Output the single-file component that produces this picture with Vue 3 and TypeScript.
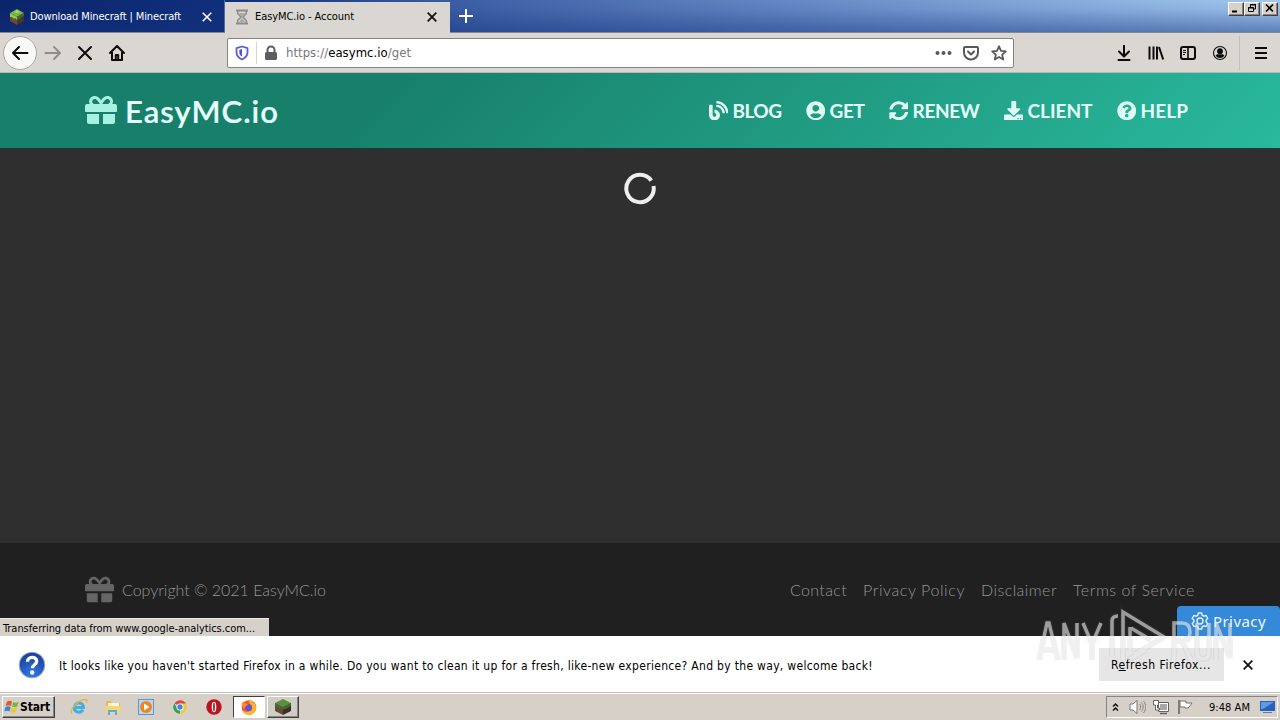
<script setup lang="ts">
interface NavItem { label: string; width: number; box: string; icon: string }

const gift = 'M32 448c0 17.7 14.3 32 32 32h160V320H32v128zm256 32h160c17.7 0 32-14.3 32-32V320H288v160zm192-320h-42.1c6.2-12.1 10.1-25.5 10.1-40 0-48.5-39.5-88-88-88-41.6 0-68.5 21.3-103 68.3-34.5-47-61.4-68.3-103-68.3-48.5 0-88 39.5-88 88 0 14.5 3.8 27.9 10.1 40H32c-17.7 0-32 14.3-32 32v80c0 8.8 7.2 16 16 16h480c8.8 0 16-7.2 16-16v-80c0-17.7-14.3-32-32-32zm-326.1 0c-22.1 0-40-17.9-40-40s17.9-40 40-40c19.9 0 34.6 3.3 86.1 80h-86.1zm206.1 0h-86.1c51.4-76.5 65.7-80 86.1-80 22.1 0 40 17.9 40 40s-17.9 40-40 40z'

const nav: NavItem[] = [
  { label: 'BLOG', width: 49, box: '0 0 512 512', icon: 'M172.2 226.8c-14.6-2.9-28.2 8.9-28.2 23.8V301c0 10.2 7.1 18.4 16.7 22 18.2 6.8 31.3 24.4 31.3 45 0 26.5-21.5 48-48 48s-48-21.5-48-48V120c0-13.3-10.7-24-24-24H24c-13.3 0-24 10.7-24 24v248c0 89.5 82.1 160.2 175 140.7 54.4-11.4 98.3-55.4 109.7-109.7 17.4-82.9-37-157.2-112.5-172.2zM209 0c-9.2-.5-17 6.8-17 16v31.6c0 8.5 6.6 15.5 15 15.9 129.4 7 233.4 112 240.9 241.5.5 8.4 7.5 15 15.9 15h32.1c9.2 0 16.5-7.8 16-17C503.4 139.8 372.2 8.6 209 0zm.3 96c-9.3-.7-17.3 6.7-17.3 16.1v32.1c0 8.4 6.5 15.3 14.8 15.9 76.8 6.3 138 68.2 144.9 145.2.8 8.3 7.6 14.7 15.9 14.7h32.2c9.3 0 16.8-8 16.1-17.3-8.4-110.1-96.5-198.2-206.6-206.7z' },
  { label: 'GET', width: 35, box: '0 0 496 512', icon: 'M248 8C111 8 0 119 0 256s111 248 248 248 248-111 248-248S385 8 248 8zm0 96c48.6 0 88 39.4 88 88s-39.4 88-88 88-88-39.4-88-88 39.4-88 88-88zm0 344c-58.7 0-111.3-26.6-146.5-68.2 18.8-35.4 55.6-59.8 98.5-59.8 2.4 0 4.8.4 7.1 1.1 13 4.2 26.6 6.9 40.9 6.9 14.3 0 28-2.7 40.9-6.9 2.3-.7 4.7-1.1 7.1-1.1 42.9 0 79.7 24.4 98.5 59.8C359.3 421.4 306.7 448 248 448z' },
  { label: 'RENEW', width: 67, box: '0 0 512 512', icon: 'M370.72 133.28C339.458 104.008 298.888 87.962 255.848 88c-77.458.068-144.328 53.178-162.791 126.85-1.344 5.363-6.122 9.15-11.651 9.15H24.103c-7.498 0-13.194-6.807-11.807-14.176C33.933 94.924 134.813 8 256 8c66.448 0 126.791 26.136 171.315 68.685L463.03 40.97C478.149 25.851 504 36.559 504 57.941V192c0 13.255-10.745 24-24 24H345.941c-21.382 0-32.09-25.851-16.971-40.971l41.75-41.749zM32 296h134.059c21.382 0 32.09 25.851 16.971 40.971l-41.75 41.75c31.262 29.273 71.835 45.319 114.876 45.28 77.418-.07 144.315-53.144 162.787-126.849 1.344-5.363 6.122-9.15 11.651-9.15h57.304c7.498 0 13.194 6.807 11.807 14.176C478.067 417.076 377.187 504 256 504c-66.448 0-126.791-26.136-171.315-68.685L48.97 471.03C33.851 486.149 8 475.441 8 454.059V320c0-13.255 10.745-24 24-24z' },
  { label: 'CLIENT', width: 65, box: '0 0 512 512', icon: 'M216 0h80c13.3 0 24 10.7 24 24v168h87.7c17.8 0 26.7 21.5 14.1 34.1L269.7 378.3c-7.5 7.5-19.8 7.5-27.3 0L90.1 226.1c-12.6-12.6-3.7-34.1 14.1-34.1H192V24c0-13.3 10.7-24 24-24zm296 376v112c0 13.3-10.7 24-24 24H24c-13.3 0-24-10.7-24-24V376c0-13.3 10.7-24 24-24h146.7l49 49c20.1 20.1 52.5 20.1 72.6 0l49-49H488c13.3 0 24 10.7 24 24zm-124 88c0-11-9-20-20-20s-20 9-20 20 9 20 20 20 20-9 20-20zm64 0c0-11-9-20-20-20s-20 9-20 20 9 20 20 20 20-9 20-20z' },
  { label: 'HELP', width: 47.5, box: '0 0 512 512', icon: 'M504 256c0 136.997-111.043 248-248 248S8 392.997 8 256C8 119.083 119.043 8 256 8s248 111.083 248 248zM262.655 90c-54.497 0-89.255 22.957-116.549 63.758-3.536 5.286-2.353 12.415 2.715 16.258l34.699 26.31c5.205 3.947 12.621 3.008 16.665-2.122 17.864-22.658 30.113-35.797 57.303-35.797 20.429 0 45.698 13.148 45.698 32.958 0 14.976-12.363 22.667-32.534 33.976C247.128 238.528 216 254.941 216 296v4c0 6.627 5.373 12 12 12h56c6.627 0 12-5.373 12-12v-1.333c0-28.462 83.186-29.647 83.186-106.667 0-58.002-60.165-102-116.531-102zM256 338c-25.365 0-46 20.635-46 46 0 25.364 20.635 46 46 46s46-20.636 46-46c0-25.365-20.635-46-46-46z' },
]

const links = [
  { label: 'Contact', width: 57 },
  { label: 'Privacy Policy', width: 102 },
  { label: 'Disclaimer', width: 76 },
  { label: 'Terms of Service', width: 122 },
]

// Spreads a label's letters so that it fills the given width.
const vFit = {
  mounted(el: HTMLElement, binding: { value: number }) {
    const count = (el.textContent ?? '').length
    const natural = el.getBoundingClientRect().width
    el.style.letterSpacing = `${(binding.value - natural) / count}px`
  },
}
</script>

<template>
  <div class="screen">
    <div class="tabs">
      <div class="tab first">
        <svg class="cube" width="16" height="18" viewBox="0 0 16 18">
          <path d="M8 1l7 4-7 4-7-4z" fill="#79b34a" /><path d="M1 5l7 4v8l-7-4z" fill="#6b4a36" /><path d="M15 5L8 9v8l7-4z" fill="#49352b" />
          <path d="M1 5l7 4v3l-2-2-1 1-2-2-2 0z" fill="#8fcb4e" /><path d="M15 5L8 9v3l3-1 1-2 3-1z" fill="#42682a" /><path d="M5 4l3-2 3 2-3 1z" fill="#a2dc62" />
        </svg>
        <span v-fit="151" class="t">Download Minecraft | Minecraft</span>
        <svg class="x" width="10" height="10" viewBox="0 0 10 10"><path d="M.7.7l8.6 8.6M9.3.7L.7 9.3" stroke="#fff" stroke-width="1.6" /></svg>
      </div>
      <div class="tab active">
        <svg width="14" height="16" viewBox="0 0 14 16" fill="none" stroke="#8d8b88">
          <path d="M1 1.500h12M1 14.500h12" stroke-width="2" /><path d="M2.700 2v2.500L6 8l-3.300 3.500V14M11.300 2v2.500L8 8l3.300 3.500V14" stroke-width="1.500" /><path d="M4 4h6L7 7.500zM7 9l3 4H4z" fill="#aaa7a3" stroke="none" />
        </svg>
        <span v-fit="99" class="t">EasyMC.io - Account</span>
        <svg class="x" width="10" height="10" viewBox="0 0 10 10"><path d="M.7.7l8.600 8.600M9.300.7L.7 9.300" stroke="#111" stroke-width="1.800" /></svg>
      </div>
      <svg class="plus" width="14" height="14" viewBox="0 0 14 14"><path d="M7 0v14M0 7h14" stroke="#fff" stroke-width="2" /></svg>
      <div class="winbtns">
        <i><svg width="14" height="12"><path d="M3 8.500h5" stroke="#000" stroke-width="2" /></svg></i>
        <i><svg width="14" height="12" fill="none" stroke="#000"><path d="M5.500 4V1.500h5v4.500H9M5 2h6M3.500 4.500h5v4h-5zM3 5h6" /></svg></i>
        <i class="closebtn"><svg width="14" height="12"><path d="M3 1.500l7 7M10 1.500l-7 7" stroke="#000" stroke-width="1.600" /></svg></i>
      </div>
    </div>

    <div class="toolbar">
      <div class="back"><svg width="18" height="16" viewBox="0 0 18 16" fill="none" stroke="#0c0c0d" stroke-width="2" stroke-linecap="round" stroke-linejoin="round"><path d="M16.500 8H2M8 2L2 8l6 6" /></svg></div>
      <svg class="fwd" width="18" height="16" viewBox="0 0 18 16" fill="none" stroke="#8f8d8a" stroke-width="2" stroke-linecap="round" stroke-linejoin="round"><path d="M1.500 8H16M10 2l6 6-6 6" /></svg>
      <svg class="stop" width="16" height="16" viewBox="0 0 16 16"><path d="M2 2l12 12M14 2L2 14" stroke="#0c0c0d" stroke-width="2" stroke-linecap="round" /></svg>
      <svg class="home" width="16" height="16" viewBox="0 0 16 16" fill="none" stroke="#0c0c0d" stroke-width="2" stroke-linecap="round" stroke-linejoin="round"><path d="M1 8l7-7 7 7M3 7v8h10V7M6.800 14.500V10h2.400v4.500" /></svg>
      <div class="url">
        <svg class="shield" width="14" height="16" viewBox="0 0 14 16"><path d="M7 1.500l5.500 1.700v4C12.500 11 10 13 7 14.500 4 13 1.500 11 1.500 7.200v-4z" fill="none" stroke="#615bdc" stroke-width="1.800" stroke-linejoin="round" /><path d="M7 4v7.500C5 10.500 4.300 9 4.300 7V4.700z" fill="#4e55d8" /></svg>
        <div class="sep"></div>
        <svg class="lock" width="14" height="16" viewBox="0 0 14 16"><rect x="1" y="7" width="12" height="8" rx="1.500" fill="#5d5d5f" /><path d="M3.500 8V5a3.500 3.500 0 017 0v3" fill="none" stroke="#5d5d5f" stroke-width="2" /></svg>
        <span v-fit="125" class="address">https://<b>easymc.io</b>/get</span>
        <svg class="dots" width="17" height="16" fill="#58585a"><circle cx="2.500" cy="8" r="2" /><circle cx="8.500" cy="8" r="2" /><circle cx="14.500" cy="8" r="2" /></svg>
        <svg class="pocket" width="16" height="16" viewBox="0 0 16 16" fill="none" stroke="#58585a" stroke-width="2" stroke-linecap="round" stroke-linejoin="round"><path d="M2 2h12a1 1 0 011 1v4.500a7 7 0 01-14 0V3a1 1 0 011-1z" /><path d="M5 6.500l3 3 3-3" /></svg>
        <svg class="star" width="16" height="16" viewBox="0 0 16 16" fill="none" stroke="#58585a" stroke-width="1.800" stroke-linejoin="round"><path d="M8 1.300l2 4.500 4.800.5-3.600 3.300 1 4.900L8 12l-4.200 2.500 1-4.900L1.200 6.300 6 5.800z" /></svg>
      </div>
      <div class="tools">
        <svg width="16" height="16" viewBox="0 0 16 16" fill="none" stroke="#0c0c0d" stroke-width="2" stroke-linecap="round" stroke-linejoin="round"><path d="M8 .8V11M3 6.500l5 5 5-5M2.500 15h11" /></svg>
        <svg width="16" height="16" viewBox="0 0 16 16" stroke="#0c0c0d" stroke-width="2"><path d="M1.500 1.500v13M5.500 1.500v13M9 1.500v13M11 2l4.200 12.500" /></svg>
        <svg width="16" height="16" viewBox="0 0 16 16" fill="none" stroke="#0c0c0d" stroke-width="2"><rect x="1" y="2" width="14" height="12" rx="2" /><path d="M8 2v12" stroke-width="1.600" /><path d="M3 5.500h3M3 7.500h3M3 9.500h2" stroke-width="1" /></svg>
        <svg width="16" height="16" viewBox="0 0 16 16" fill="none" stroke="#0c0c0d"><circle cx="8" cy="8" r="6.500" stroke-width="1.100" /><circle cx="8" cy="6.200" r="2.900" fill="#0c0c0d" stroke="none" /><path d="M3.600 10.800c1-2 2.500-1.500 4.400-1.500s3.400-.5 4.400 1.500A5.400 5.400 0 018 13a5.400 5.400 0 01-4.400-2.200z" fill="#0c0c0d" stroke="none" /></svg>
      </div>
      <div class="menusep"></div>
      <svg class="menu" width="14" height="14"><path d="M1 2h12M1 7h12M1 12h12" stroke="#0c0c0d" stroke-width="2" /></svg>
    </div>

    <header class="header">
      <svg class="logo" width="32" height="32" viewBox="0 0 512 512"><path :d="gift" fill="#a8f2e4" /></svg>
      <span v-fit="154" class="brand">EasyMC.io</span>
      <nav class="nav">
        <a v-for="item in nav" :key="item.label">
          <svg width="19.500" height="19.500" :viewBox="item.box"><path :d="item.icon" fill="#dffaf5" /></svg>
          <span v-fit="item.width">{{ item.label }}</span>
        </a>
      </nav>
    </header>

    <main class="main">
      <svg width="34" height="34" viewBox="0 0 34 34"><path d="M28.300 9.700A13.700 13.700 0 1030.500 15" fill="none" stroke="#efefef" stroke-width="4" /></svg>
    </main>

    <footer class="footer">
      <svg class="mark" width="29" height="29" viewBox="0 0 512 512"><path :d="gift" fill="#656565" /></svg>
      <span v-fit="204" class="copy">Copyright © 2021 EasyMC.io</span>
      <div class="links"><a v-for="l in links" :key="l.label" v-fit="l.width">{{ l.label }}</a></div>
      <div class="status"><span v-fit="252">Transferring data from www.google-analytics.com...</span></div>
      <div class="privacy">
        <svg width="18" height="18" viewBox="0 0 18 18" fill="none" stroke="#e6f2fc" stroke-width="1.400" stroke-linejoin="round"><path d="M7.300 1h3.400l.5 2.300 1.600.9 2.300-.7 1.700 3L15.100 8v2l1.700 1.500-1.700 3-2.300-.7-1.600.9-.5 2.300H7.300l-.5-2.300-1.600-.9-2.300.7-1.700-3L2.900 10V8L1.200 6.500l1.700-3 2.300.7 1.600-.9z" /><circle cx="9" cy="9" r="3" /></svg>
        <span v-fit="53">Privacy</span>
      </div>
    </footer>

    <div class="notice">
      <svg class="help" width="28" height="28" viewBox="0 0 28 28">
        <defs><radialGradient id="ball" cx=".5" cy=".85" r=".8"><stop offset="0" stop-color="#2f7be0" /><stop offset="1" stop-color="#1b3f9e" /></radialGradient></defs>
        <circle cx="14" cy="14" r="13.300" fill="#9fb0cf" /><circle cx="14" cy="14" r="12.200" fill="url(#ball)" />
        <path d="M9.500 10.800c0-5.800 9.200-5.800 9.200-.5 0 3.500-4.400 3.400-4.400 7" fill="none" stroke="#fff" stroke-width="3.300" /><circle cx="14.200" cy="21.500" r="2.200" fill="#fff" />
      </svg>
      <span v-fit="814" class="msg">It looks like you haven't started Firefox in a while. Do you want to clean it up for a fresh, like-new experience? And by the way, welcome back!</span>
      <div class="refresh"><span v-fit="100">R<u>e</u>fresh Firefox...</span></div>
      <svg class="nx" width="10" height="10" viewBox="0 0 10 10"><path d="M.7.7l8.600 8.600M9.300.7L.7 9.300" stroke="#111" stroke-width="1.800" /></svg>
    </div>

    <div class="taskbar">
      <div class="start">
        <svg width="17" height="16" viewBox="0 0 17 16"><path d="M3 2.500c2-1.200 3.500-1 5 0L7 7c-1.800-1-3.500-1-5.300 0z" fill="#e2572c" /><path d="M9 3c2 1 3.600 1 5.700 0l-1.400 4.500c-2 1-3.500.8-5.200 0z" fill="#75b843" /><path d="M1.500 8c1.800-1 3.500-.9 5.200 0l-1.200 4.500c-1.700-1-3.300-1-5.200 0z" fill="#3886d4" /><path d="M7.700 8.500c1.800 1 3.400 1 5.300 0L11.700 13c-2 1.100-3.600.9-5.300 0z" fill="#f2c52d" /></svg>
        <b v-fit="30">Start</b>
      </div>
      <div class="apps">
        <svg width="18" height="18" viewBox="0 0 18 18" fill="none"><path d="M4.300 9.500h9.200c.2-5.800-9-6-9.200 0 0 5 6.300 6.300 8.600 2.300" stroke="#42aee5" stroke-width="3" /><path d="M2 15.500C-1 12 8 1.500 15.500 1.500c2 0 1.800 2 1 3.500" stroke="#e7b73c" stroke-width="1.300" /></svg>
        <svg width="18" height="18" viewBox="0 0 18 18"><path d="M2 3h5l1 2h8v10H2z" fill="#e3bd53" /><path d="M4 5h11v4H4z" fill="#f9f4d5" /><path d="M1.500 8h15v7h-15z" fill="#f2d778" /><path d="M4 17v-5h9v5h-2v-3H6v3z" fill="#5fa9dc" /></svg>
        <svg width="18" height="18" viewBox="0 0 18 18"><rect x="1.500" y="1.500" width="15" height="15" fill="#b9d8f2" stroke="#5998cf" /><circle cx="9" cy="9" r="6" fill="#ef861d" /><path d="M7 5.500l5.500 3.500L7 12.500z" fill="#fff" /></svg>
        <svg width="18" height="18" viewBox="0 0 18 18"><path d="M9 9L3.500 5.200A6.700 6.700 0 0115 5.800H9z" fill="#df493b" /><path d="M9 9v6.700A6.700 6.700 0 013.200 5.500l3.300 5z" fill="#36a256" /><path d="M9 15.700A6.700 6.700 0 0015 5.800H9l3 5z" fill="#f5c832" /><circle cx="9" cy="9" r="3.500" fill="#fff" /><circle cx="9" cy="9" r="2.700" fill="#4583e8" /></svg>
        <svg width="18" height="18" viewBox="0 0 18 18"><circle cx="9" cy="9" r="7.700" fill="#b8141c" /><ellipse cx="9" cy="9" rx="2.300" ry="5.300" fill="#f6eeee" /><ellipse cx="9" cy="9" rx=".8" ry="4.500" fill="#8a1117" /></svg>
      </div>
      <div class="task sunken">
        <svg width="18" height="18" viewBox="0 0 18 18"><circle cx="9" cy="9.500" r="7.300" fill="#f45334" /><path d="M9.500 1c1 2 5 3 6.300 7 1.200 5-2 9-6.800 9-4 0-6-2.500-7-5 4 3 9 2 9-2 0-3-3-5-1.500-9z" fill="#ffb527" /><circle cx="8.500" cy="9.700" r="3.600" fill="#6b50d2" /><path d="M2 5l2-2 1 2.500 3 .5c-1 2-3 2-3 4C3 10 1 8 2 5z" fill="#fb8b2a" /></svg>
      </div>
      <div class="task raised">
        <svg width="18" height="18" viewBox="0 0 18 18"><path d="M9 1l8 4-8 4-8-4z" fill="#5c8f43" /><path d="M1 5l8 4v8l-8-4z" fill="#6a4834" /><path d="M17 5L9 9v8l8-4z" fill="#3f2c22" /><path d="M1 5l8 4v2.500L6 10l-2 0-3-2zM17 5L9 9v2.500l4-1 4-3z" fill="#416d2f" /></svg>
      </div>
      <div class="tray">
        <svg class="up" width="8" height="11" viewBox="0 0 8 11" fill="none" stroke="#111" stroke-width="1.500"><path d="M1 4.500l2.500-2.500L6 4.500M1 8.500l2.500-2.500L6 8.500" /></svg>
        <svg class="vol" width="17" height="16" viewBox="0 0 17 16"><path d="M1 5h3l4-3.500v13L4 11H1z" fill="#fff" stroke="#77736f" /><path d="M10.500 5c1.500 2 1.500 4 0 6M12.500 3.500c2.200 3 2.200 6 0 9M14.500 2c3 4 3 8 0 12" fill="none" stroke="#85817d" /></svg>
        <svg class="net" width="17" height="16" viewBox="0 0 17 16"><path d="M5.500 3.500h10v9h-10z" fill="#fff" stroke="#65625f" /><path d="M7 5h7v6H7z" fill="#aaa7a3" /><path d="M7 14.500h7" stroke="#65625f" stroke-width="1.500" /><path d="M.5 1.500h5V6h-1v3h2v2h-4V6h-2z" fill="#fff" stroke="#65625f" /></svg>
        <svg class="flag" width="17" height="16" viewBox="0 0 17 16"><path d="M2 1v14" stroke="#77736f" stroke-width="1.800" /><path d="M3 2h6v2h6l-2 3-2 2H8V8H3z" fill="#fff" stroke="#77736f" /></svg>
        <span v-fit="41" class="clock">9:48 AM</span>
        <svg class="desk" width="16" height="14" viewBox="0 0 16 14"><path d="M0 1h15v10H0z" fill="#2763bd" /><path d="M1 2h13L3 9H1z" fill="#609be2" /><path d="M3 12.500h9" stroke="#667a9a" /></svg>
      </div>
    </div>

    <div class="watermark">
      <svg width="200" height="62" viewBox="0 0 200 62" fill="none">
        <g v-for="layer in ['halo', 'ink']" :key="layer" :class="layer">
          <path d="M3 57L11 20h2l9 37M6 47h13M28 57V20l13 35V20M47 20l9 21 9-21M56 41v16" />
          <path d="M76 53V18q0-5 6-5M87 57V9l41 25-29 17M92 57l18-10M94 24v24M95 25l20 12" />
          <path d="M138 57V20h8q8 0 8 9t-8 9h-8M146 38l9 19M161 20v29q0 7 6 7t6-7V20M180 57V20l14 35V20" />
        </g>
      </svg>
    </div>
  </div>
</template>

<style>
body { margin: 0; overflow: hidden; }
</style>

<style scoped>
.screen { position: relative; width: 1280px; height: 720px; display: flex; flex-direction: column; overflow: hidden; font: 11px/14px "DejaVu Sans Condensed", "DejaVu Sans", sans-serif; color: #000; background: #d6d2ca; }
.screen * { box-sizing: border-box; }
svg, span, a, b { flex: none; }
span, a, b { white-space: nowrap; }
.tabs { height: 33px; flex: none; display: flex; align-items: flex-start; border-bottom: 1px solid #86888c; background: linear-gradient(180deg, rgba(20,50,125,0), rgba(20,50,125,.08) 30%, rgba(20,50,125,.48)), linear-gradient(90deg, #0a246a 0, #102f7c 18%, #3d5fa5 36%, #6286c3 60%, #88aede 84%, #a2c8ef 100%); }
.tab { height: 33px; display: flex; align-items: center; }
.first { width: 225px; padding: 1px 0 0 9px; color: #fff; border-right: 1px solid #536aa0; height: 32px; }
.first .t { margin-left: 5px; }
.first .x { margin-left: 21px; }
.active { width: 225px; margin-top: 2px; height: 31px; padding: 0 0 1px 10px; background: #dad7d2; }
.active .t { margin-left: 6px; }
.active .x { margin-left: 73px; }
.plus { margin: 9px 0 0 9px; }
.winbtns { margin: 2px 2px 0 auto; display: flex; }
.winbtns i { width: 16px; height: 14px; background: #d6d2ca; border: 1px solid; border-color: #fff #404040 #404040 #fff; box-shadow: inset -1px -1px #858585; }
.winbtns svg { display: block; }
.winbtns .closebtn { margin-left: 2px; }
.toolbar { height: 40px; flex: none; display: flex; align-items: center; background: #dad7d2; border-bottom: 1px solid #bab8b3; }
.back { width: 34px; height: 34px; flex: none; margin-left: 3px; border: 1px solid #aaa8a3; border-radius: 50%; background: #f8f8f6; display: flex; align-items: center; justify-content: center; }
.fwd { margin-left: 7px; }
.stop { margin-left: 15px; }
.home { margin-left: 16px; }
.url { width: 787px; height: 30px; flex: none; margin-left: 102px; background: #fff; border: 1px solid #858481; border-radius: 2px; display: flex; align-items: center; }
.shield { margin-left: 7px; }
.sep { width: 1px; height: 22px; margin-left: 7px; background: #d6d4cf; }
.lock { margin-left: 7px; }
.address { margin: 1px 0 0 8px; font-size: 13px; line-height: 18px; color: #77777a; }
.address b { color: #000; font-weight: 400; }
.dots { margin-left: auto; }
.pocket { margin-left: 11px; }
.star { margin: 0 6px 0 12px; }
.tools { display: flex; gap: 16px; margin-left: 102px; }
.menusep { width: 1px; height: 34px; margin-left: 11px; background: #c4c1bc; }
.menu { margin-left: 14px; }
.header { height: 76px; flex: none; display: flex; align-items: center; padding: 0 92px 0 85px; background: linear-gradient(135deg, #18806a 0, #18806a 30%, #29b99d 100%); border-bottom: 1px solid #173c34; font-family: Lato, sans-serif; }
.logo { margin-top: -1px; }
.brand { margin-left: 8px; font-size: 31px; line-height: 38px; font-weight: 600; color: #e7fffa; -webkit-text-stroke: .2px #e7fffa; }
.nav { display: flex; margin-left: auto; gap: 24px; }
.nav a { display: flex; align-items: center; gap: 4.500px; font-size: 19px; line-height: 24px; font-weight: 700; color: #e7fffa; }
.main { height: 394px; flex: none; background: #2f2f2f; display: flex; justify-content: center; padding-top: 22px; }
.footer { position: relative; height: 93px; flex: none; background: #202020; display: flex; align-items: flex-start; padding: 33px 85px 0; font: 300 16px/28px Lato, sans-serif; color: #959595; }
.mark { margin-top: -1px; }
.copy { margin-left: 8px; }
.links { display: flex; gap: 16px; margin-left: auto; }
.status { position: absolute; left: 0; bottom: 0; width: 269px; height: 18px; padding: 1px 0 0 3px; background: #d6d2ca; border-top: 1px solid #eceae6; font: 11px/18px "DejaVu Sans Condensed", sans-serif; color: #000; display: flex; }
.privacy { position: absolute; right: 0; bottom: 0; width: 103px; height: 30px; background: #3489d8; border-radius: 4px 4px 0 0; display: flex; align-items: center; padding-left: 14px; font: 15px/20px "Noto Sans", sans-serif; color: #eef7ff; }
.privacy span { margin-left: 4px; }
.notice { height: 57px; flex: none; background: #fff; display: flex; align-items: center; border-bottom: 1px solid #c3c0ba; }
.help { margin: 1px 0 0 18px; }
.msg { margin: 3px 0 0 13px; font-size: 12px; line-height: 18px; }
.refresh { width: 125px; height: 33px; flex: none; margin-left: 226px; background: #e6e6e6; display: flex; align-items: center; padding: 2px 0 0 12px; font-size: 12px; }
.nx { margin: 1px 0 0 19px; }
.taskbar { height: 27px; flex: none; display: flex; align-items: center; border-top: 1px solid #fff; background: #d6d0c8; }
.start { width: 53px; height: 22px; flex: none; margin-left: 2px; display: flex; align-items: center; border: 1px solid; border-color: #fff #404040 #404040 #fff; box-shadow: inset -1px -1px #858585; }
.start svg { margin-left: 1px; }
.start b { margin-left: -1px; font-size: 12px; }
.apps { display: flex; margin-left: 15px; gap: 15.700px; flex: none; }
.task { width: 32px; height: 22px; flex: none; display: flex; align-items: center; justify-content: center; border: 1px solid; }
.sunken { margin-left: 10px; background: #fff; border-color: #404040 #fff #fff #404040; }
.raised { margin-left: 2px; background: #d0ccc6; border-color: #fff #404040 #404040 #fff; box-shadow: inset -1px -1px #858585; }
.tray { width: 172px; height: 22px; flex: none; margin: 0 2px 0 auto; display: flex; align-items: center; border: 1px solid; border-color: #858585 #fff #fff #858585; }
.up { margin-left: 5px; }
.vol { margin-left: 9px; }
.net { margin-left: 7px; }
.flag { margin-left: 7px; }
.clock { margin: 1px 0 0 15px; }
.desk { margin-left: 10px; }
.watermark { position: absolute; left: 1036px; top: 603px; pointer-events: none; }
.halo { stroke: #888; stroke-width: 6; opacity: .1; }
.ink { stroke: #f0f0f0; stroke-width: 3.500; opacity: .58; }
</style>
